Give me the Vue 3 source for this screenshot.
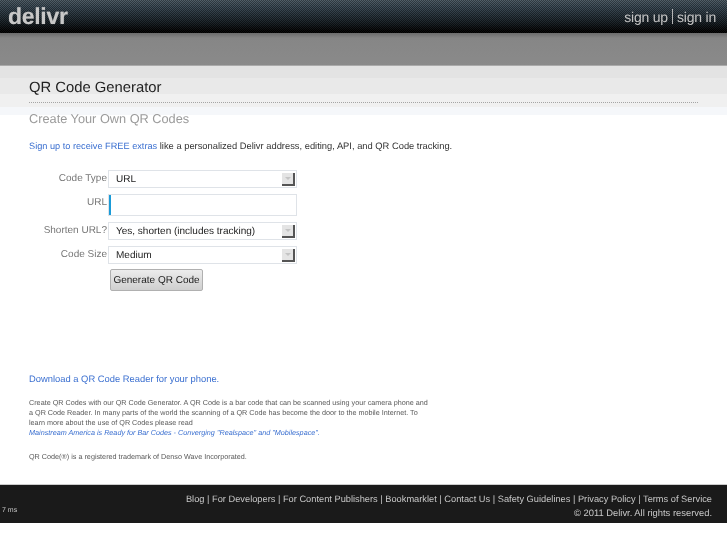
<script setup>
const selects = { type: 'URL', shorten: 'Yes, shorten (includes tracking)', size: 'Medium' }
const footerLinks = ['Blog', 'For Developers', 'For Content Publishers', 'Bookmarklet', 'Contact Us', 'Safety Guidelines', 'Privacy Policy', 'Terms of Service']
</script>

<template>
  <div class="page">
    <header class="top">
      <span class="logo">delivr</span>
      <nav class="auth"><a>sign up</a><i class="bar"></i><a>sign in</a></nav>
    </header>
    <div class="band"></div>
    <div class="title-band">
      <h1>QR Code Generator</h1>
      <div class="dots"></div>
    </div>
    <main class="main">
      <h2>Create Your Own QR Codes</h2>
      <p class="promo"><a>Sign up to receive FREE extras</a> like a personalized Delivr address, editing, API, and QR Code tracking.</p>
      <form class="form" @submit.prevent>
        <div class="row">
          <label>Code Type</label>
          <div class="select"><span>{{ selects.type }}</span><b class="arrow"><em></em></b></div>
        </div>
        <div class="row row-url">
          <label>URL</label>
          <div class="input"><i class="caret"></i></div>
        </div>
        <div class="row">
          <label>Shorten URL?</label>
          <div class="select"><span>{{ selects.shorten }}</span><b class="arrow"><em></em></b></div>
        </div>
        <div class="row row-size">
          <label>Code Size</label>
          <div class="select"><span>{{ selects.size }}</span><b class="arrow"><em></em></b></div>
        </div>
        <div class="row row-btn">
          <button type="button">Generate QR Code</button>
        </div>
      </form>
      <a class="reader">Download a QR Code Reader for your phone.</a>
      <p class="small">Create QR Codes with our QR Code Generator. A QR Code is a bar code that can be scanned using your camera phone and a QR Code Reader. In many parts of the world the scanning of a QR Code has become the door to the mobile Internet. To learn more about the use of QR Codes please read<br><a>Mainstream America is Ready for Bar Codes - Converging "Realspace" and "Mobilespace".</a></p>
      <p class="small tm">QR Code(®) is a registered trademark of Denso Wave Incorporated.</p>
    </main>
    <footer class="foot">
      <span class="ms">7 ms</span>
      <div class="foot-right">
        <div class="links"><template v-for="(l, i) in footerLinks" :key="l"><span v-if="i"> | </span><a>{{ l }}</a></template></div>
        <div class="copy">© 2011 Delivr. All rights reserved.</div>
      </div>
    </footer>
  </div>
</template>

<style>
html, body { margin: 0; background: #fff; }
</style>

<style scoped>
.page { width: 727px; height: 545px; overflow: hidden; font-family: "Liberation Sans", Arial, sans-serif; color: #222; will-change: transform; text-rendering: geometricPrecision; }
.top {
  height: 33px; box-sizing: border-box; padding: 0 11px 0 8px;
  display: flex; justify-content: space-between; align-items: flex-start;
  background:
    repeating-conic-gradient(rgba(0,0,0,.32) 0 25%, rgba(255,255,255,.05) 0 50%) 0 0 / 2px 2px,
    linear-gradient(#4a5862 0, #32414c 8px, #141c22 22px, #000 31px);
}
.logo { font-size: 23px; line-height: 33px; font-weight: 700; color: #c8c8c8; letter-spacing: -.3px; text-shadow: 0 0 1px rgba(200,200,200,.6); }
.auth { display: flex; align-items: center; gap: 3px; height: 33px; font-size: 14px; color: #c4c4c4; letter-spacing: -.2px; }
.auth a { color: #c4c4c4; }
.bar { width: 1px; height: 15px; background: #b5b5b5; margin: 0 1px; }
.band { height: 33px; background: linear-gradient(#6c6c6c 0, #868686 5px, #8a8a8a 100%); border-bottom: 1px solid #aaa; box-sizing: border-box; }
.title-band {
  height: 41px; box-sizing: border-box; padding: 12px 29px 0 29px;
  background: linear-gradient(#e3e3e3 0 12px, #e9e9e9 12px 28px, #f0f0f0 28px);
}
h1 { margin: 0; font-size: 14.8px; line-height: 20px; font-weight: 400; color: #222; }
.dots { height: 1px; margin-top: 4px; background: repeating-linear-gradient(90deg, #a5a5a5 0 1px, transparent 1px 2px); }
.main { padding: 0 29px; background: linear-gradient(#f5f7fa 0, #f5f7fa 8px, #fff 8px); }
h2 { margin: 0; padding-top: 4px; font-size: 12.75px; line-height: 15px; font-weight: 400; color: #9a9a9a; height: 15px; }
.promo { margin: 0; padding-top: 15px; font-size: 9.35px; line-height: 11px; color: #333; }
.promo a { font-size: 9.2px; }
a { color: #3a6fd0; }
.form { margin-top: 18px; height: 203px; display: flex; flex-direction: column; }
.row { display: flex; align-items: flex-start; height: 18px; margin-bottom: 6px; flex: none; }
.row-url { height: 22px; }
.row-size { margin-bottom: 5px; }
.row label { width: 78px; padding: 1px 2px 0 0; text-align: right; font-size: 10px; line-height: 15px; color: #777; flex: none; }
.select, .input { width: 189px; box-sizing: border-box; border: 1px solid #dfe3e8; background: #fff; height: 18px; display: flex; align-items: center; justify-content: space-between; flex: none; margin-left: -1px; }
.select span { padding-left: 7px; font-size: 10px; color: #222; }
.input { height: 22px; justify-content: flex-start; }
.caret { width: 2px; height: 20px; background: #1a9bd8; margin-left: 0; }
.arrow { width: 11px; height: 11px; margin-right: 1px; background: #e4e4e4; border-right: 2px solid #555; border-bottom: 2px solid #555; display: flex; align-items: center; justify-content: center; box-sizing: content-box; }
.arrow em { width: 0; height: 0; border-left: 3px solid transparent; border-right: 3px solid transparent; border-top: 3px solid #c4c4c4; }
.row-btn { margin: 0; padding-left: 81px; }
button { width: 93px; height: 22px; padding: 0; border: 1px solid #b0b0b0; border-radius: 2px; background: linear-gradient(#ececec, #cfcfcf); font: 10px "Liberation Sans", Arial, sans-serif; color: #222; text-rendering: geometricPrecision; }
.reader { display: block; font-size: 9.4px; line-height: 12px; }
.small { margin: 13px 0 0; width: 402px; font-size: 7.22px; line-height: 10px; color: #5a5a5a; }
.small a { font-style: italic; }
.tm { margin-top: 14px; }
.foot {
  position: relative; margin-top: 22px; height: 39px; box-sizing: border-box; padding: 7px 15px 0 0;
  background: #1a1a1a; border-top: 1px solid #ccc; color: #c8c8c8; font-size: 9.27px; line-height: 14px; text-align: right;
}
.foot a { color: #c8c8c8; }
.copy { font-size: 9.4px; }
.ms { position: absolute; left: 2px; top: 19px; font-size: 7px; }
</style>
